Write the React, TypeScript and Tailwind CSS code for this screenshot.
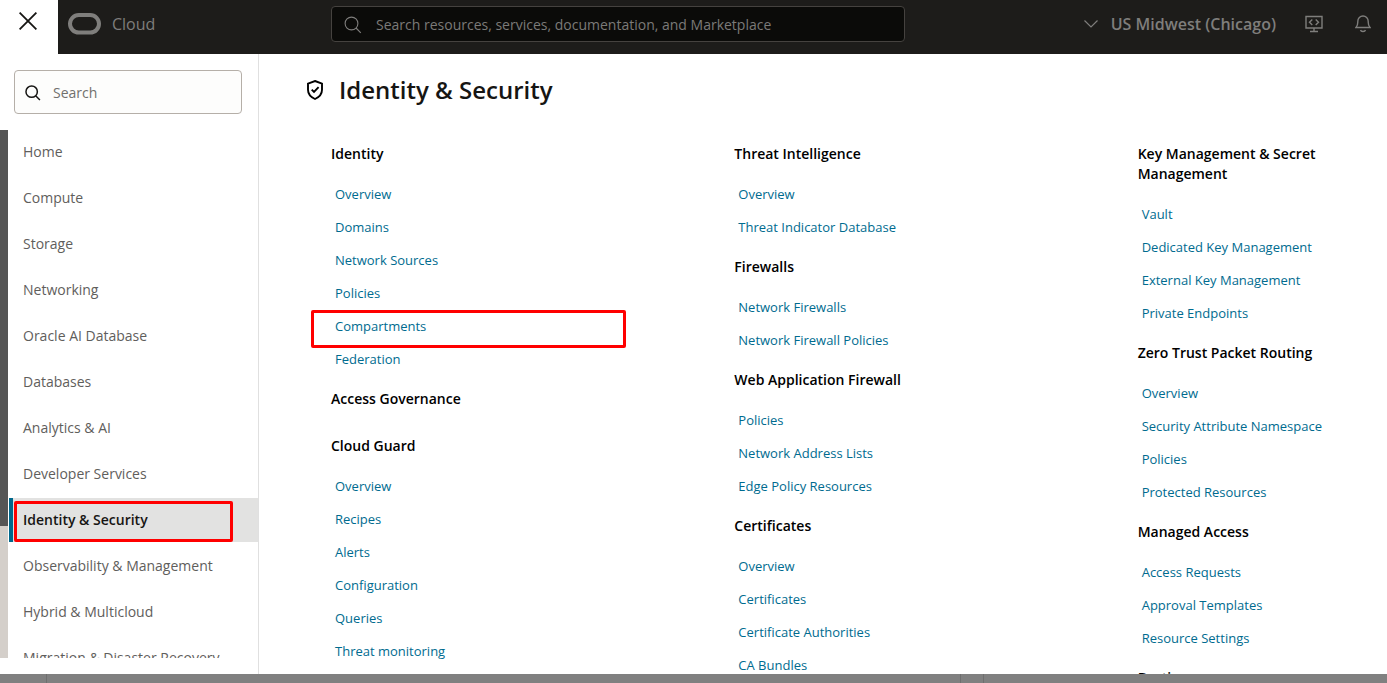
import React from "react";

type Section = { title: string; links: string[] };

const services = [
  "Home",
  "Compute",
  "Storage",
  "Networking",
  "Oracle AI Database",
  "Databases",
  "Analytics & AI",
  "Developer Services",
  "Identity & Security",
  "Observability & Management",
  "Hybrid & Multicloud",
  "Migration & Disaster Recovery",
];

const columns: Section[][] = [
  [
    {
      title: "Identity",
      links: ["Overview", "Domains", "Network Sources", "Policies", "Compartments", "Federation"],
    },
    { title: "Access Governance", links: [] },
    {
      title: "Cloud Guard",
      links: ["Overview", "Recipes", "Alerts", "Configuration", "Queries", "Threat monitoring"],
    },
  ],
  [
    { title: "Threat Intelligence", links: ["Overview", "Threat Indicator Database"] },
    { title: "Firewalls", links: ["Network Firewalls", "Network Firewall Policies"] },
    {
      title: "Web Application Firewall",
      links: ["Policies", "Network Address Lists", "Edge Policy Resources"],
    },
    {
      title: "Certificates",
      links: ["Overview", "Certificates", "Certificate Authorities", "CA Bundles"],
    },
  ],
  [
    {
      title: "Key Management & Secret Management",
      links: ["Vault", "Dedicated Key Management", "External Key Management", "Private Endpoints"],
    },
    {
      title: "Zero Trust Packet Routing",
      links: ["Overview", "Security Attribute Namespace", "Policies", "Protected Resources"],
    },
    {
      title: "Managed Access",
      links: ["Access Requests", "Approval Templates", "Resource Settings"],
    },
    { title: "Bastion", links: [] },
  ],
];

function SearchIcon({ className, strokeWidth }: { className: string; strokeWidth: number }) {
  return (
    <svg className={className} viewBox="0 0 18 18" fill="none" stroke="currentColor" strokeWidth={strokeWidth} aria-hidden="true">
      <circle cx="7.5" cy="7.5" r="6.4" />
      <path d="M12 12l4.8 4.8" />
    </svg>
  );
}

function TopBar() {
  return (
    <header className="flex h-[54px] shrink-0 bg-[#1d1c1a] text-[#7f7e7c]">
      <button type="button" aria-label="Close menu" className="flex w-[58px] shrink-0 justify-center bg-white pt-3 pr-0.5 text-[#161513]">
        <svg className="h-[18px] w-[18px]" viewBox="0 0 18 18" fill="none" stroke="currentColor" strokeWidth="1.8" aria-hidden="true">
          <path d="M.6.6l16.8 16.8M17.4.6L.6 17.4" />
        </svg>
      </button>
      <div className="flex min-w-0 flex-1 items-center pr-4 pb-1.5">
        <a href="#cloud" className="flex w-[273px] shrink-0 items-center gap-[11px] pl-2.5">
          <svg className="h-[22px] w-[33px]" viewBox="0 0 33 22" fill="none" stroke="currentColor" strokeWidth="4" aria-hidden="true">
            <rect x="2" y="2" width="29" height="17.6" rx="8.8" />
          </svg>
          <span className="text-base font-medium">Cloud</span>
        </a>
        <label className="flex h-9 w-[574px] min-w-0 items-center gap-3.5 rounded border border-[#45423f] bg-[#0b0b09] px-3 pt-0.5">
          <SearchIcon className="h-[18px] w-[18px] shrink-0" strokeWidth={1.1} />
          <input
            type="search"
            aria-label="Search resources"
            placeholder="Search resources, services, documentation, and Marketplace"
            className="min-w-0 flex-1 bg-transparent text-sm outline-none placeholder:text-[#7b7a78]"
          />
        </label>
        <button type="button" className="ml-auto flex shrink-0 items-center gap-[13px] text-base font-semibold">
          <svg className="h-2 w-3.5" viewBox="0 0 14 8" fill="none" stroke="currentColor" strokeWidth="1.2" aria-hidden="true">
            <path d="M.5.5L7 7 13.5.5" />
          </svg>
          US Midwest (Chicago)
        </button>
        <button type="button" aria-label="Developer tools" className="ml-[29px] shrink-0">
          <svg className="h-[18px] w-[18px]" viewBox="0 0 18 18" fill="none" stroke="currentColor" strokeWidth="1.4" aria-hidden="true">
            <path d="M1 1.500h16v11.500H1zM9 13v3.500M5 16.500h8M7.300 4.600L4.500 7.300l2.800 2.700M10.700 4.600l2.800 2.700-2.800 2.700" />
          </svg>
        </button>
        <button type="button" aria-label="Notifications" className="ml-8 shrink-0">
          <svg className="h-[18px] w-4" viewBox="0 0 16 18" fill="none" stroke="currentColor" strokeWidth="1.4" aria-hidden="true">
            <path d="M1 12.500h14C13.500 11 13.200 9.500 13.200 7V6.200a5.200 5.200 0 0 0-10.400 0V7c0 2.500-.3 4-1.800 5.500zM5.500 15c.6 1.900 4.400 1.900 5 0" />
          </svg>
        </button>
      </div>
    </header>
  );
}

function Sidebar() {
  return (
    <aside className="flex w-[259px] shrink-0 flex-col border-r border-[#e0e0e0] pt-4 pb-4">
      <label className="mr-4 ml-3.5 flex h-11 shrink-0 items-center gap-3 rounded border border-[#b5afa8] bg-[#fdfdfc] px-2.5 pt-0.5">
        <SearchIcon className="h-4 w-4 shrink-0 text-[#161513]" strokeWidth={1.7} />
        <input
          type="search"
          aria-label="Search services"
          placeholder="Search"
          className="min-w-0 flex-1 bg-transparent text-sm outline-none placeholder:text-[#71706d]"
        />
      </label>
      <div className="mt-4 flex min-h-0 flex-1 gap-px">
        <div className="w-2 shrink-0 bg-[#d4cfca]">
          <div className="h-3/4 bg-[#555555]" />
        </div>
        <nav aria-label="Services" className="min-w-0 flex-1 overflow-hidden">
          <ul className="flex flex-col gap-0.5">
            {services.map((name) => {
              const selected = name === "Identity & Security";
              return (
                <li key={name} className="relative shrink-0">
                  <a
                    href="#service"
                    aria-current={selected ? "page" : undefined}
                    className={
                      selected
                        ? "flex h-11 items-center border-l-4 border-[#00688c] bg-[#e2e2e1] pl-2.5 text-sm font-semibold text-[#161513]"
                        : "flex h-11 items-center border-l-4 border-transparent pl-2.5 text-sm text-[#5f5e5c]"
                    }
                  >
                    {name}
                  </a>
                  {selected && (
                    <span className="pointer-events-none absolute top-[3px] right-[25px] bottom-0 left-[5px] rounded-xs border-3 border-[#ff0000]" />
                  )}
                </li>
              );
            })}
          </ul>
        </nav>
      </div>
    </aside>
  );
}

function LinkSection({ title, links }: Section) {
  return (
    <section className="pb-[13px]">
      <h2 className="mb-3.5 text-sm leading-5 font-semibold text-black">{title}</h2>
      <ul>
        {links.map((link) => (
          <li key={link} className="relative flex h-[33px] items-center pl-1">
            <a href="#page" className="text-[13px] whitespace-nowrap text-[#006b8f]">
              {link}
            </a>
            {link === "Compartments" && (
              <span className="pointer-events-none absolute top-0 -left-5 h-[38px] w-[315px] rounded-xs border-3 border-[#ff0000]" />
            )}
          </li>
        ))}
      </ul>
    </section>
  );
}

export default function App() {
  return (
    <div className="flex h-screen flex-col overflow-hidden bg-white font-['Open_Sans','Noto_Sans',sans-serif]">
      <TopBar />
      <div className="flex min-h-0 flex-1">
        <Sidebar />
        <main className="min-w-0 flex-1 overflow-hidden pr-[26px] pl-[72px]">
          <div className="-ml-6 flex h-[72px] items-center gap-4">
            <svg className="h-5 w-4 shrink-0" viewBox="0 0 16 20" fill="none" stroke="#000" strokeWidth="1.9" aria-hidden="true">
              <path d="M8 1L15 3.700v6.100c0 4.200-2.700 7.300-7 9.200-4.300-1.900-7-5-7-9.200V3.700z" />
              <path d="M4.700 9.700L7 12l4.600-4.800" />
            </svg>
            <h1 className="text-2xl font-semibold text-[#161513]">Identity &amp; Security</h1>
          </div>
          <div className="grid grid-cols-3 gap-x-[180px] pt-[18px]">
            {columns.map((sections, index) => (
              <div key={index} className="min-w-0">
                {sections.map((section) => (
                  <LinkSection key={section.title} title={section.title} links={section.links} />
                ))}
              </div>
            ))}
          </div>
        </main>
      </div>
      <footer className="flex h-[9px] shrink-0 bg-[#808080]">
        <div className="w-[47px] border-r border-[#6f6f6f]" />
        <div className="flex-1" />
        <div className="w-6 border-x border-[#6f6f6f]" />
        <div className="w-[403px]" />
      </footer>
    </div>
  );
}
